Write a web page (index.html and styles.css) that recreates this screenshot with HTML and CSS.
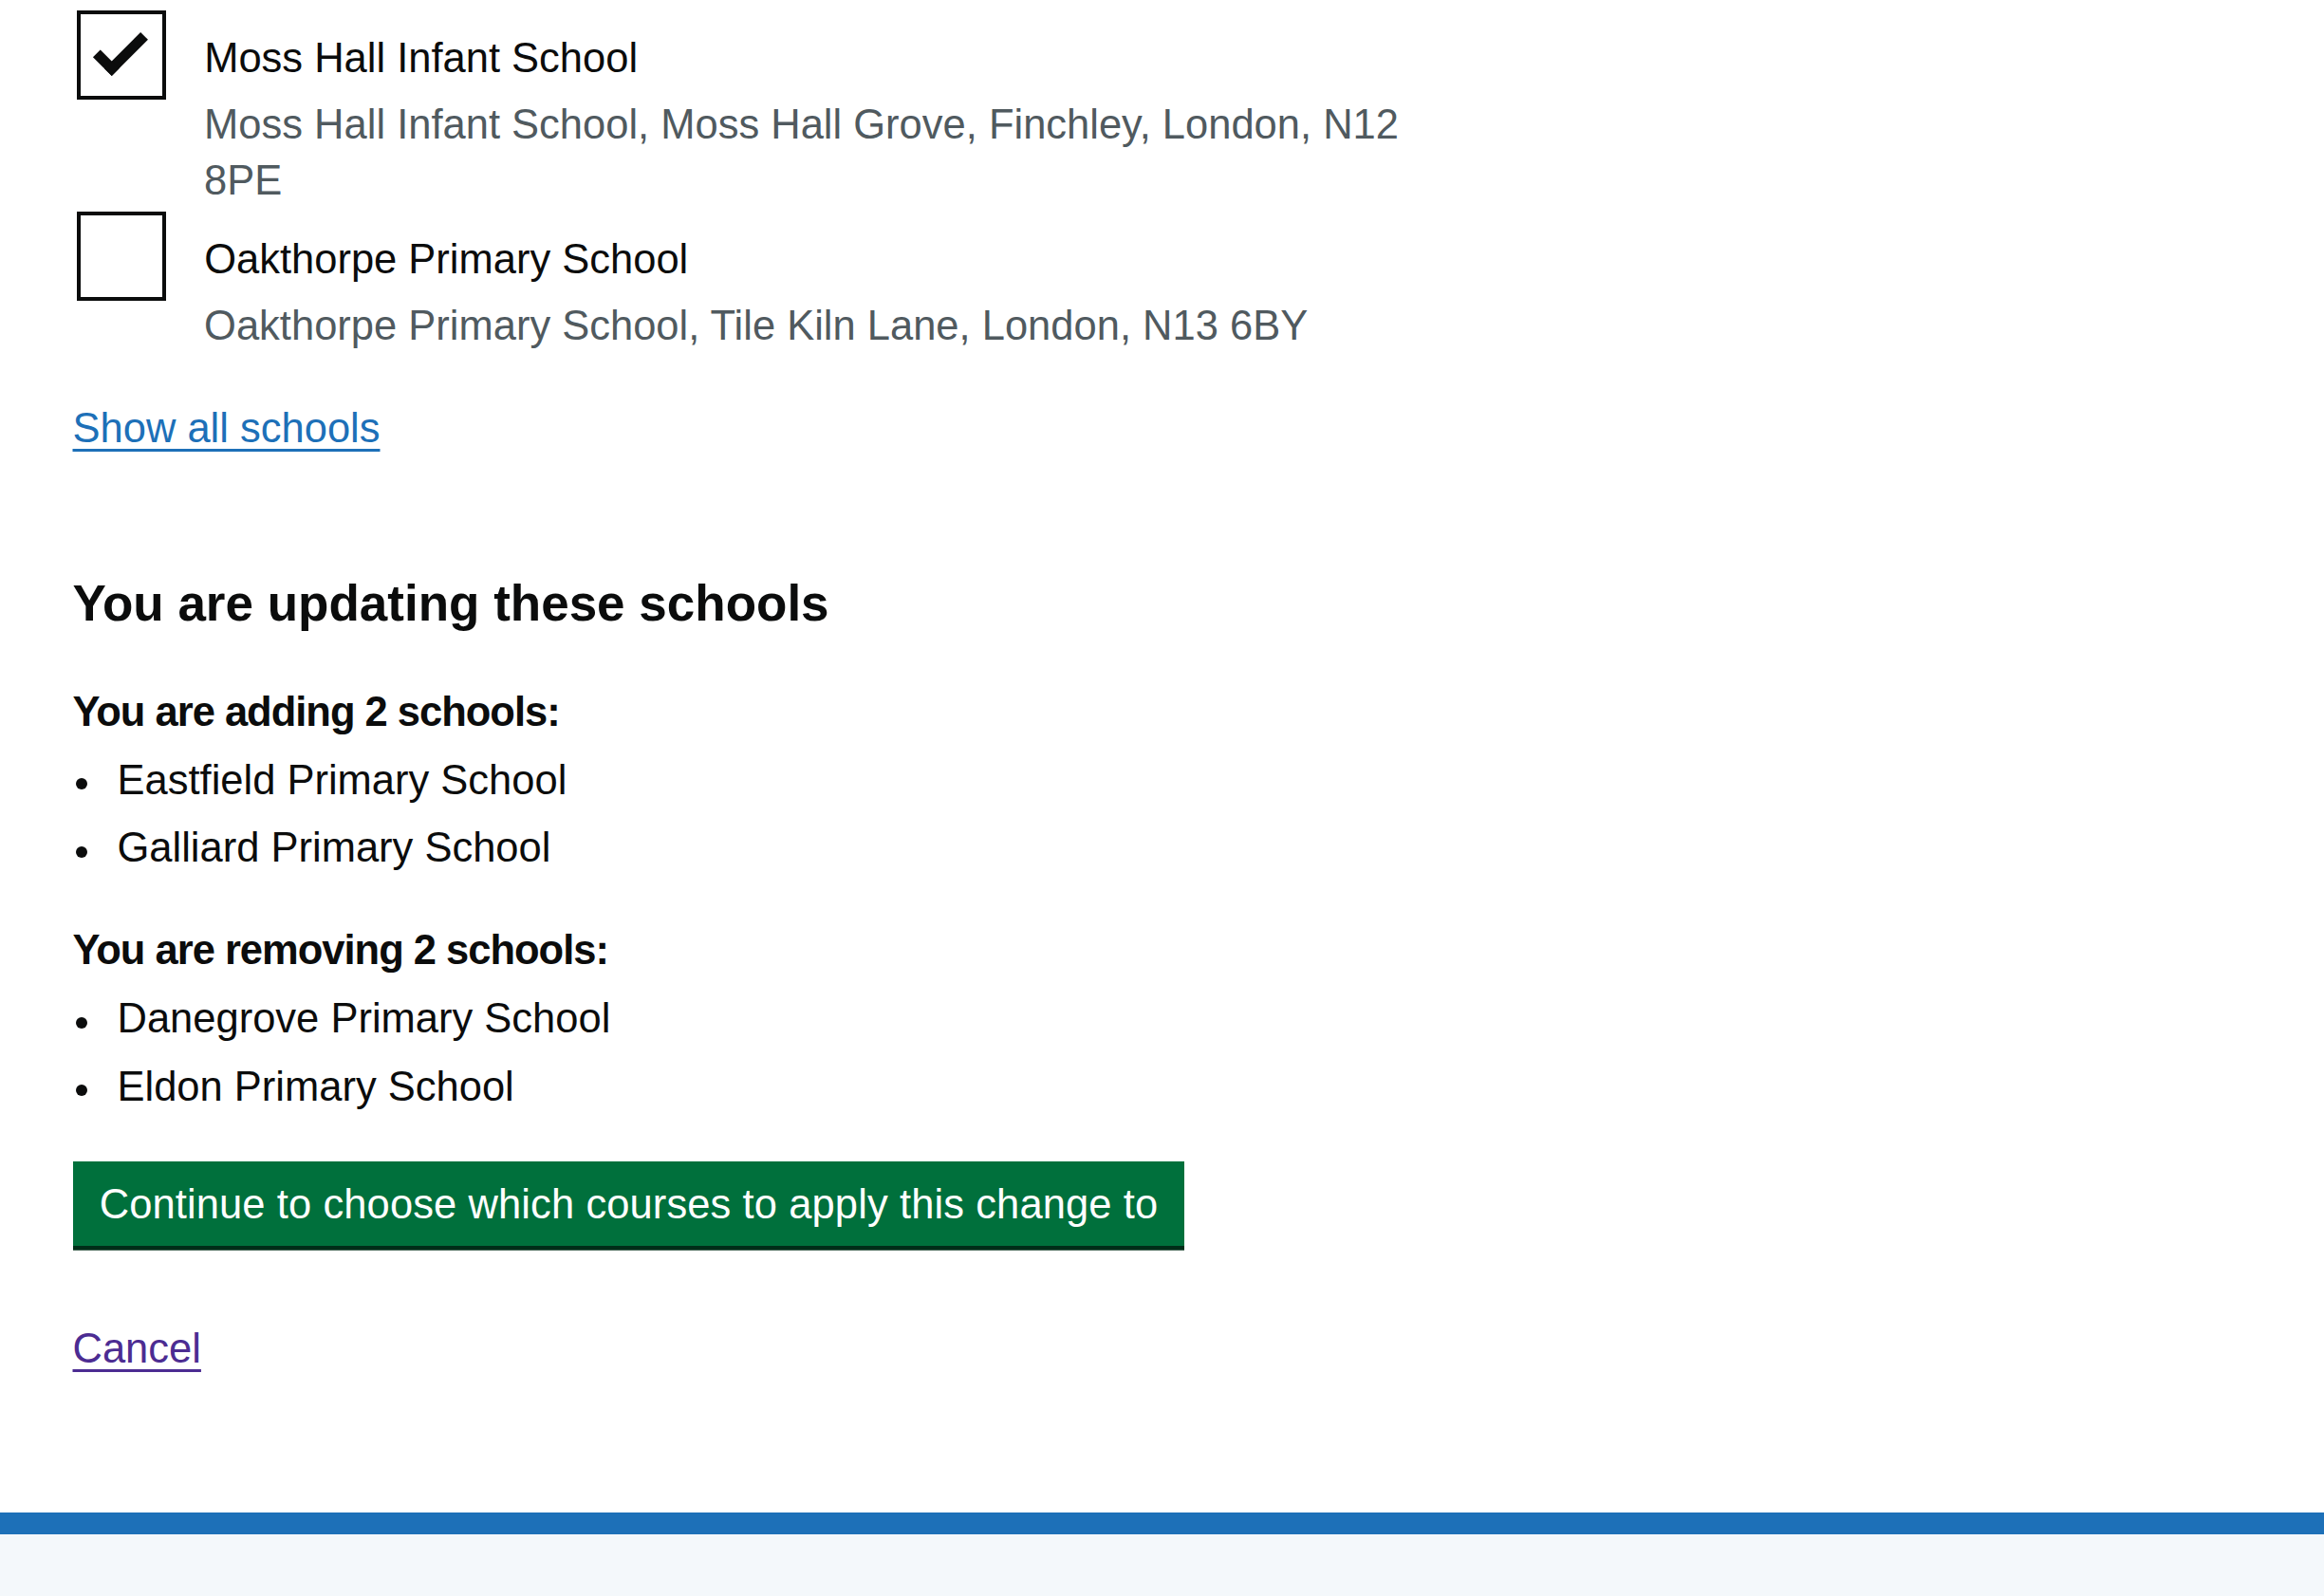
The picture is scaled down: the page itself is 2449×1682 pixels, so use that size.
FILE: index.html
```html
<!DOCTYPE html>
<html lang="en">
<head>
<meta charset="utf-8">
<title>Update schools</title>
<link rel="stylesheet" href="styles.css">
</head>
<body>
<main class="main">
  <div class="checkboxes">
    <div class="cb-item">
      <input class="cb-input" type="checkbox" id="school-1" checked>
      <label class="cb-label" for="school-1">Moss Hall Infant School</label>
      <div class="cb-hint">Moss Hall Infant School, Moss Hall Grove, Finchley, London, N12 8PE</div>
    </div>
    <div class="cb-item">
      <input class="cb-input" type="checkbox" id="school-2">
      <label class="cb-label" for="school-2">Oakthorpe Primary School</label>
      <div class="cb-hint">Oakthorpe Primary School, Tile Kiln Lane, London, N13 6BY</div>
    </div>
  </div>

  <p class="show-all"><a class="link" href="#">Show all schools</a></p>

  <h2 class="heading-m">You are updating these schools</h2>

  <p class="body-bold">You are adding 2 schools:</p>
  <ul class="bullets">
    <li>Eastfield Primary School</li>
    <li>Galliard Primary School</li>
  </ul>

  <p class="body-bold">You are removing 2 schools:</p>
  <ul class="bullets">
    <li>Danegrove Primary School</li>
    <li>Eldon Primary School</li>
  </ul>

  <button class="button" type="button">Continue to choose which courses to apply this change to</button>

  <p class="cancel"><a class="link link--visited" href="#">Cancel</a></p>
</main>
<footer class="footer"></footer>
</body>
</html>
```

FILE: styles.css
```css
html, body {
  margin: 0;
  padding: 0;
  background: #ffffff;
}

body {
  font-family: "Liberation Sans", Arial, sans-serif;
  font-size: 43.5px;
  line-height: 58.75px;
  color: #0b0c0c;
  display: flex;
  flex-direction: column;
  min-height: 100vh;
}

.main {
  width: 1480px;
  padding: 6.8px 0 0 76.5px;
  flex: 1 0 auto;
  box-sizing: content-box;
}

/* Checkboxes */
.checkboxes {
  margin-bottom: 50.6px;
}

.cb-item {
  position: relative;
  display: flex;
  flex-wrap: wrap;
}

.cb-input {
  width: 103.4px;
  height: 103.4px;
  margin: 0;
  opacity: 0;
  cursor: pointer;
}

.cb-label {
  padding: 25.5px 35.25px 21.5px;
  cursor: pointer;
  align-self: center;
}

.cb-label::before {
  content: "";
  position: absolute;
  top: 4.7px;
  left: 4.7px;
  width: 94px;
  height: 94px;
  box-sizing: border-box;
  border: 4.7px solid #0b0c0c;
  background: #ffffff;
}

.cb-input:checked + .cb-label::after {
  content: "";
  position: absolute;
  top: 30.5px;
  left: 23.5px;
  width: 54px;
  height: 28.2px;
  box-sizing: border-box;
  border: solid #0b0c0c;
  border-width: 0 0 11.75px 11.75px;
  border-top-color: transparent;
  transform: rotate(-45deg);
}

.cb-hint {
  width: 100%;
  margin-top: -11.75px;
  padding: 1.5px 35.25px 0 138.6px;
  margin-bottom: -1.5px;
  box-sizing: border-box;
  color: #505a5f;
}

/* Links */
.link {
  color: #1d70b8;
  text-decoration: underline;
  text-decoration-thickness: 2.6px;
  text-underline-offset: 7px;
}

.link--visited {
  color: #4c2c92;
}

.show-all {
  margin: 0 0 120.4px;
}

/* Typography */
.heading-m {
  margin: 0 0 49.4px;
  font-size: 53px;
  line-height: 70.5px;
  font-weight: 700;
}

.body-bold {
  margin: 0 0 13.2px;
  font-weight: 700;
  letter-spacing: -1px;
}

.bullets {
  list-style: none;
  margin: 0 0 49.2px;
  padding: 0 0 0 47px;
}

.bullets li {
  position: relative;
}

.bullets li + li {
  margin-top: 13px;
}

.bullets li::before {
  content: "";
  position: absolute;
  left: -43.5px;
  top: 27.5px;
  width: 12px;
  height: 12px;
  border-radius: 50%;
  background: #0b0c0c;
}

.bullets + .button {
  margin-top: 1px;
}

/* Button */
.button {
  display: block;
  margin: 0 0 78.5px;
  padding: 23.5px 28.2px 21.15px;
  border: 0;
  border-radius: 0;
  background: #00703c;
  color: #ffffff;
  font-family: "Liberation Sans", Arial, sans-serif;
  font-size: 43.5px;
  line-height: 44.65px;
  letter-spacing: 0.1px;
  text-align: center;
  box-shadow: 0 4.7px 0 #002d18;
  cursor: pointer;
}

.cancel {
  margin: 0 0 143.6px;
}

/* Footer */
.footer {
  flex: 0 0 auto;
  height: 120px;
  border-top: 23.5px solid #1d70b8;
  background: #f4f8fb;
}
```
